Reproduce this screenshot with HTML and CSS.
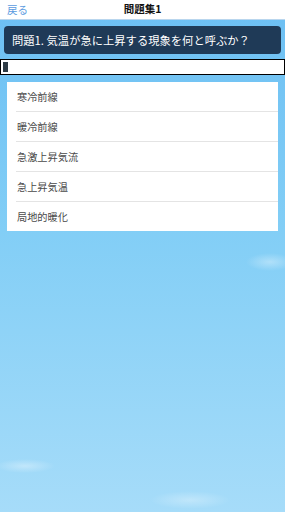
FILE: index.html
```html
<!DOCTYPE html>
<html lang="ja">
<head>
  <meta charset="UTF-8">
  <title>問題集1</title>
  <link rel="stylesheet" href="styles.css">
</head>
<body>
  <div class="nav-bar">
    <a class="back" href="#">戻る</a>
    <div class="title">問題集1</div>
    <div></div>
  </div>

  <div class="question">問題1. 気温が急に上昇する現象を何と呼ぶか？</div>

  <div class="answer-box"><span class="cursor"></span></div>

  <ul class="choices">
    <li>寒冷前線</li>
    <li>暖冷前線</li>
    <li>急激上昇気流</li>
    <li>急上昇気温</li>
    <li>局地的暖化</li>
  </ul>
</body>
</html>
```

FILE: styles.css
```css
html, body {
  height: 100%;
}
body {
  margin: 0;
  font-family: "Noto Sans CJK JP", "Noto Sans", sans-serif;
  background:
    radial-gradient(ellipse 24px 9px at 270px 262px, rgba(255,255,255,0.35), rgba(255,255,255,0) 100%),
    radial-gradient(ellipse 30px 7px at 25px 466px, rgba(255,255,255,0.35), rgba(255,255,255,0) 100%),
    radial-gradient(ellipse 40px 9px at 190px 500px, rgba(255,255,255,0.3), rgba(255,255,255,0) 100%),
    linear-gradient(#6cbff3 0%, #82cef6 45%, #a6dcf9 100%);
  overflow: hidden;
}
.nav-bar {
  display: grid;
  grid-template-columns: 1fr auto 1fr;
  align-items: center;
  height: 20px;
  background-color: #fff;
  border-bottom: 1px solid #b9d6ee;
  box-sizing: border-box;
}
.back {
  padding-left: 7px;
  font-size: 10.5px;
  color: #5b9be0;
  text-decoration: none;
}
.title {
  font-size: 10.5px;
  font-weight: bold;
  color: #111;
  margin-top: -2px;
}
.question {
  margin: 6px 4px 0 4px;
  height: 28px;
  padding-left: 8px;
  display: flex;
  align-items: center;
  background-color: #1f3a57;
  border-radius: 4px;
  color: #fff;
  font-size: 11.3px;
  white-space: nowrap;
}
.answer-box {
  margin-top: 5px;
  height: 16px;
  border: 1px solid #000;
  background-color: #fff;
  box-sizing: border-box;
  display: flex;
  align-items: center;
  padding-left: 2px;
}
.cursor {
  width: 5px;
  height: 10px;
  background-color: #2d3b45;
}
.choices {
  list-style: none;
  margin: 7px 7px 0 7px;
  padding: 0;
  background-color: #fff;
}
.choices li {
  margin-left: 9px;
  padding-left: 1px;
  height: 29px;
  line-height: 29px;
  font-size: 10.2px;
  color: #4a4a4a;
  border-bottom: 1px solid #e4e4e4;
}
.choices li:last-child {
  border-bottom: none;
}
```
